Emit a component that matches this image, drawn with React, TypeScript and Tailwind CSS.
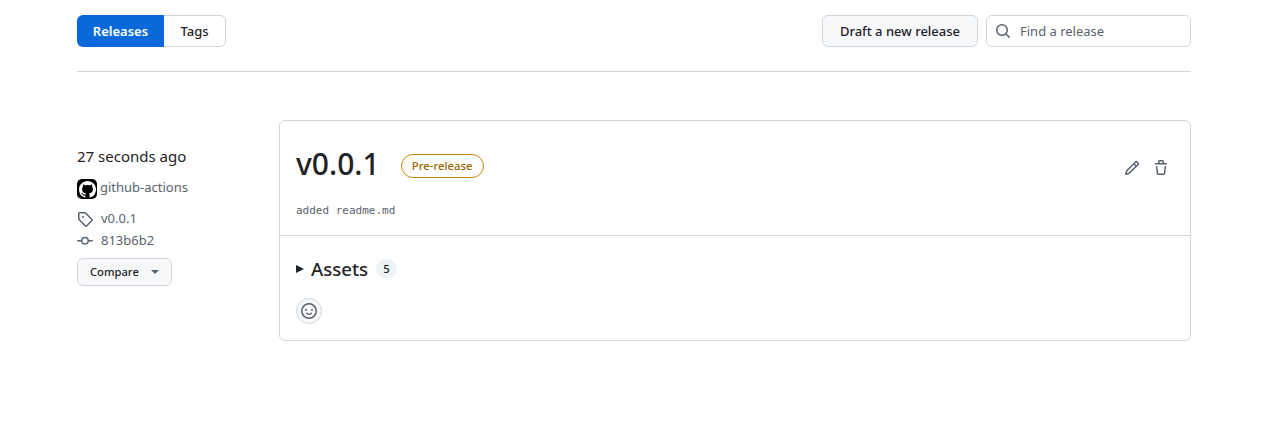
function Octicon({ d, size = 16, className = "" }: { d: string; size?: number; className?: string }) {
  return (
    <svg viewBox="0 0 16 16" width={size} height={size} fill="currentColor" className={`shrink-0 ${className}`}>
      <path fillRule="evenodd" d={d} />
    </svg>
  );
}

const searchIcon =
  "M10.68 11.74a6 6 0 0 1-7.922-8.982 6 6 0 0 1 8.982 7.922l3.04 3.04a.749.749 0 0 1-.326 1.275.749.749 0 0 1-.734-.215ZM11.5 7a4.499 4.499 0 1 0-8.997 0A4.499 4.499 0 0 0 11.5 7Z";
const tagIcon =
  "M1 7.775V2.75C1 1.784 1.784 1 2.75 1h5.025c.464 0 .91.184 1.238.513l6.25 6.25a1.75 1.75 0 0 1 0 2.474l-5.026 5.026a1.75 1.75 0 0 1-2.474 0l-6.25-6.25A1.752 1.752 0 0 1 1 7.775Zm1.5 0c0 .066.026.13.073.177l6.25 6.25a.25.25 0 0 0 .354 0l5.025-5.025a.25.25 0 0 0 0-.354l-6.25-6.25a.25.25 0 0 0-.177-.073H2.75a.25.25 0 0 0-.25.25ZM6 5a1 1 0 1 1 0 2 1 1 0 0 1 0-2Z";
const commitIcon =
  "M11.93 8.5a4.002 4.002 0 0 1-7.86 0H.75a.75.75 0 0 1 0-1.5h3.32a4.002 4.002 0 0 1 7.86 0h3.32a.75.75 0 0 1 0 1.5Zm-1.43-.75a2.5 2.5 0 1 0-5 0 2.5 2.5 0 0 0 5 0Z";
const pencilIcon =
  "M11.013 1.427a1.75 1.75 0 0 1 2.474 0l1.086 1.086a1.75 1.75 0 0 1 0 2.474l-8.61 8.61c-.21.21-.47.364-.756.445l-3.251.93a.75.75 0 0 1-.927-.928l.929-3.25c.081-.286.235-.547.445-.758l8.61-8.61Zm.176 4.823L9.75 4.81l-6.286 6.287a.253.253 0 0 0-.064.108l-.558 1.953 1.953-.558a.253.253 0 0 0 .108-.064Zm1.238-3.763a.25.25 0 0 0-.354 0L10.811 3.75l1.439 1.44 1.263-1.263a.25.25 0 0 0 0-.354Z";
const trashIcon =
  "M11 1.75V3h2.25a.75.75 0 0 1 0 1.5H2.75a.75.75 0 0 1 0-1.5H5V1.75C5 .784 5.784 0 6.75 0h2.5C10.216 0 11 .784 11 1.75ZM4.496 6.675l.66 6.6a.25.25 0 0 0 .249.225h5.19a.25.25 0 0 0 .249-.225l.66-6.6a.75.75 0 0 1 1.492.149l-.66 6.6A1.748 1.748 0 0 1 10.595 15h-5.19a1.75 1.75 0 0 1-1.741-1.575l-.66-6.6a.75.75 0 1 1 1.492-.15ZM6.5 1.75V3h3V1.75a.25.25 0 0 0-.25-.25h-2.5a.25.25 0 0 0-.25.25Z";
const smileyIcon =
  "M8 0a8 8 0 1 1 0 16A8 8 0 0 1 8 0ZM1.5 8a6.5 6.5 0 1 0 13 0 6.5 6.5 0 0 0-13 0Zm3.82 1.636a.75.75 0 0 1 1.038.175l.007.009c.103.118.22.222.35.31.264.178.683.37 1.285.37.602 0 1.02-.192 1.285-.371.13-.088.247-.192.35-.31l.007-.008a.75.75 0 0 1 1.222.87l-.022-.015c.02.013.021.015.021.015v.001l-.001.002-.002.003-.005.007-.014.019a2.066 2.066 0 0 1-.184.213c-.16.166-.338.316-.53.445-.63.418-1.37.638-2.127.629-.946 0-1.652-.308-2.126-.63a3.331 3.331 0 0 1-.715-.657l-.014-.02-.005-.006-.002-.003v-.002h-.001l.613-.432-.614.43a.75.75 0 0 1 .183-1.044ZM12 7a1 1 0 1 1-2 0 1 1 0 0 1 2 0ZM5 8a1 1 0 1 1 0-2 1 1 0 0 1 0 2Zm5.25 2.25.592.416a97.71 97.71 0 0 0-.592-.416Z";
const githubMark =
  "M8 0c4.42 0 8 3.58 8 8a8.013 8.013 0 0 1-5.45 7.59c-.4.08-.55-.17-.55-.38 0-.27.01-1.13.01-2.2 0-.75-.25-1.23-.54-1.48 1.78-.2 3.65-.88 3.65-3.95 0-.88-.31-1.59-.82-2.15.08-.2.36-1.02-.08-2.12 0 0-.67-.22-2.2.82-.64-.18-1.32-.27-2-.27-.68 0-1.36.09-2 .27-1.53-1.03-2.2-.82-2.2-.82-.44 1.1-.16 1.92-.08 2.12-.51.56-.82 1.28-.82 2.15 0 3.06 1.86 3.75 3.64 3.95-.23.2-.44.55-.51 1.07-.46.21-1.61.55-2.33-.66-.15-.24-.6-.83-1.23-.82-.67.01-.27.38.01.53.34.19.73.9.82 1.13.16.45.68 1.31 2.69.94 0 .67.01 1.3.01 1.49 0 .21-.15.45-.55.38A7.995 7.995 0 0 1 0 8c0-4.42 3.58-8 8-8Z";

export default function App() {
  return (
    <div className="min-h-[445px] bg-white px-[77px] pt-[15px] font-['Noto_Sans',sans-serif] text-[13px] text-[#1f2328]">
      {/* Top bar */}
      <div className="flex items-center justify-between border-b border-[#d1d5de] pb-6">
        <div className="flex h-8 text-[13px] font-semibold">
          <div className="flex w-[87px] items-center justify-center rounded-l-md bg-[#0969da] pt-px text-white">Releases</div>
          <div className="flex w-[62px] items-center justify-center rounded-r-md border border-l-0 border-[#d1d5de] pt-px font-medium">Tags</div>
        </div>
        <div className="flex items-center gap-2">
          <button className="flex h-8 w-[156px] items-center justify-center rounded-md border border-[#d1d5de] bg-[#f6f8fa] pt-px font-medium">
            Draft a new release
          </button>
          <div className="flex h-8 w-[205px] items-center rounded-md border border-[#d1d5de] pl-2 text-[#59636e]">
            <Octicon d={searchIcon} className="text-[#59636e]" />
            <span className="ml-[9px] pt-px">Find a release</span>
          </div>
        </div>
      </div>

      {/* Release row */}
      <div className="mt-12 flex">
        <div className="w-[202px] shrink-0 pt-[26px]">
          <div className="text-[15px] leading-[20px]">27 seconds ago</div>
          <div className="mt-[13px] flex items-center gap-[3px] text-[#59636e]">
            <div className="flex h-5 w-5 items-center justify-center rounded-[5px] bg-black text-white">
              <Octicon d={githubMark} size={17} />
            </div>
            <span className="-mt-[5px] leading-5">github-actions</span>
          </div>
          <div className="mt-[9px] flex h-[22px] items-center gap-2 text-[#59636e]">
            <Octicon d={tagIcon} />
            <span>v0.0.1</span>
          </div>
          <div className="flex h-[22px] items-center gap-2 text-[#59636e]">
            <Octicon d={commitIcon} />
            <span>813b6b2</span>
          </div>
          <button className="mt-[6px] flex h-7 w-[95px] items-center rounded-md border border-[#d1d5de] bg-[#f6f8fa] pl-3 text-[11.2px] font-medium">
            Compare
            <span className="ml-3 h-0 w-0 border-x-4 border-t-4 border-x-transparent border-t-[#59636e]" />
          </button>
        </div>

        <div className="h-[221px] flex-1 rounded-md border border-[#d1d5de]">
          <div className="h-[115px] border-b border-[#d1d5de] px-4">
            <div className="flex items-start justify-between pt-[20px]">
              <div className="flex items-center gap-[21px]">
                <h1 className="text-[30px] font-medium leading-[45px]">v0.0.1</h1>
                <span className="mt-[4px] flex h-6 w-[83px] items-center justify-center rounded-full border border-[#bf8700] pt-px text-[11.3px] font-medium text-[#9a6700]">
                  Pre-release
                </span>
              </div>
              <div className="mt-[19px] mr-[5px] flex items-center gap-[13px] text-[#59636e]">
                <Octicon d={pencilIcon} />
                <Octicon d={trashIcon} />
              </div>
            </div>
            <div className="mt-[18px] font-['DejaVu_Sans_Mono',monospace] text-[11px] leading-[14px] text-[#59636e]">
              added readme.md
            </div>
          </div>
          <div className="px-4 pt-[21px]">
            <div className="flex items-center">
              <span className="h-0 w-0 border-y-4 border-l-[8px] border-y-transparent border-l-[#1f2328]" />
              <span className="ml-[7px] text-[18.6px] font-medium leading-[24px]">Assets</span>
              <span className="ml-2 flex h-5 w-[21px] items-center justify-center rounded-full bg-[#eff2f5] pt-px text-[11.3px] font-medium">5</span>
            </div>
            <div className="mt-[17px] flex h-[26px] w-[26px] items-center justify-center rounded-full border border-[#d1d5de] bg-[#f6f8fa] text-[#59636e]">
              <Octicon d={smileyIcon} />
            </div>
          </div>
        </div>
      </div>
    </div>
  );
}
